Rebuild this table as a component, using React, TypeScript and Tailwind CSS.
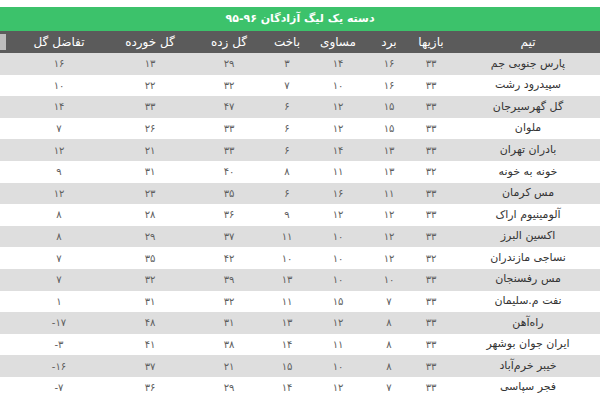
import React from "react";

type Row = [string, number, number, number, number, number, number, number];

const ROWS: Row[] = [
  ["پارس جنوبی جم", 33, 16, 14, 3, 29, 13, 16],
  ["سپیدرود رشت", 33, 16, 10, 7, 32, 22, 10],
  ["گل گهرسیرجان", 33, 15, 12, 6, 47, 33, 14],
  ["ملوان", 33, 15, 12, 6, 33, 26, 7],
  ["بادران تهران", 33, 13, 14, 6, 33, 21, 12],
  ["خونه به خونه", 32, 13, 11, 8, 40, 31, 9],
  ["مس کرمان", 33, 11, 16, 6, 35, 23, 12],
  ["آلومینیوم اراک", 33, 12, 12, 9, 36, 28, 8],
  ["اکسین البرز", 33, 12, 10, 11, 37, 29, 8],
  ["نساجی مازندران", 32, 12, 10, 10, 42, 35, 7],
  ["مس رفسنجان", 33, 10, 10, 13, 39, 32, 7],
  ["نفت م.سلیمان", 33, 7, 15, 11, 32, 31, 1],
  ["راه‌آهن", 33, 8, 12, 13, 31, 48, -17],
  ["ایران جوان بوشهر", 33, 8, 11, 14, 38, 41, -3],
  ["خیبر خرم‌آباد", 33, 8, 10, 15, 21, 37, -16],
  ["فجر سپاسی", 33, 7, 12, 14, 29, 36, -7],
];

const HEAD = ["تیم", "بازیها", "برد", "مساوی", "باخت", "گل زده", "گل خورده", "تفاضل گل"];

const fa = (n: number) =>
  (n < 0 ? "-" : "") +
  String(Math.abs(n)).replace(/\d/g, (d) => "۰۱۲۳۴۵۶۷۸۹"[Number(d)]);

// columns right to left: team, games, W, D, L, GF, GA, GD, stub
const COLS = "grid grid-cols-[144px_50px_34px_68px_34px_82px_76px_106px_6px]";

export default function App() {
  return (
    <div
      dir="rtl"
      className="w-[600px] h-[400px] overflow-hidden bg-white pt-[7px]"
      style={{ fontFamily: '"DejaVu Sans", sans-serif' }}
    >
      <div className="h-[24px] bg-[#3cc26b] flex items-center justify-center text-[11px] font-bold text-white">
        دسته یک لیگ آزادگان ۹۶-۹۵
      </div>
      <div className={`${COLS} h-[22px] bg-[#5b5b5b] text-white text-[12px]`}>
        {HEAD.map((h) => (
          <div key={h} className="flex items-center justify-center">
            {h}
          </div>
        ))}
        <div className="my-[3px] bg-[#bdbdbd]" />
      </div>
      {ROWS.map((r, i) => (
        <div
          key={r[0]}
          className={`${COLS} h-[21.6px] ${i % 2 === 0 ? "bg-[#dedede]" : "bg-white"}`}
        >
          <div className="flex items-center justify-center text-[11px] text-[#333]">{r[0]}</div>
          {r.slice(1).map((v, j) => (
            <div
              key={j}
              dir="ltr"
              className="flex items-center justify-center text-[10px] text-[#5e5e5e]"
            >
              {fa(v as number)}
            </div>
          ))}
          <div />
        </div>
      ))}
    </div>
  );
}
